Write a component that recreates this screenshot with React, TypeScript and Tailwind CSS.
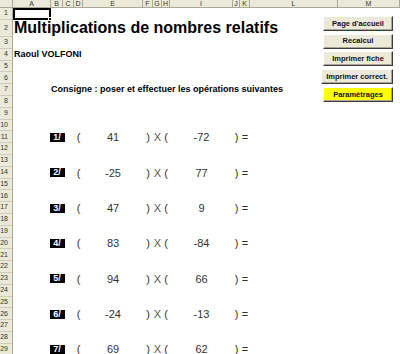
const columns = [
  { label: "A", w: "w-[38px]" },
  { label: "B", w: "w-[12px]" },
  { label: "C", w: "w-[11px]" },
  { label: "D", w: "w-[9px]" },
  { label: "E", w: "w-[60px]" },
  { label: "F", w: "w-[10px]" },
  { label: "G", w: "w-[9px]" },
  { label: "H", w: "w-[8px]" },
  { label: "I", w: "w-[63px]" },
  { label: "J", w: "w-[7px]" },
  { label: "K", w: "w-[10px]" },
  { label: "L", w: "w-[88px]" },
  { label: "M", w: "flex-1" },
];

const problems: Record<number, { n: number; a: string; b: string }> = {
  11: { n: 1, a: "41", b: "-72" },
  14: { n: 2, a: "-25", b: "77" },
  17: { n: 3, a: "47", b: "9" },
  20: { n: 4, a: "83", b: "-84" },
  23: { n: 5, a: "94", b: "66" },
  26: { n: 6, a: "-24", b: "-13" },
  29: { n: 7, a: "69", b: "62" },
};

const rowNumbers = Array.from({ length: 30 }, (_, i) => i + 1);

const buttons = [
  { label: "Page d'accueil", w: "w-[70px]", bg: "bg-[#ece9d8]" },
  { label: "Recalcul", w: "w-[70px]", bg: "bg-[#ece9d8]" },
  { label: "Imprimer fiche", w: "w-[70px]", bg: "bg-[#ece9d8]" },
  { label: "Imprimer correct.", w: "w-[72px]", bg: "bg-[#ece9d8]" },
  { label: "Paramétrages", w: "w-[70px]", bg: "bg-[#ffff00]" },
];

function rowHeight(r: number) {
  return r === 2 ? "h-[17.3px]" : "h-[11.8px]";
}

function ProblemRow({ n, a, b }: { n: number; a: string; b: string }) {
  return (
    <div className="flex h-full items-center text-[11px] text-[#333]">
      <div className="w-[38px]" />
      <div className="w-[12px] flex justify-center">
        <span className="shrink-0 w-[15px] h-[9px] bg-black text-white font-bold text-[9px] leading-[9px] flex items-center justify-center">
          {n}/
        </span>
      </div>
      <div className="w-[11px]" />
      <div className="w-[9px] flex justify-center">(</div>
      <div className="w-[60px] text-center">{a}</div>
      <div className="w-[10px] text-center">)</div>
      <div className="w-[9px] text-center font-light text-[#555]">X</div>
      <div className="w-[8px] text-center">(</div>
      <div className="w-[63px] text-center">{b}</div>
      <div className="w-[7px] text-center">)</div>
      <div className="w-[10px] text-center">=</div>
    </div>
  );
}

function SheetRow({ r }: { r: number }) {
  const p = problems[r];
  return (
    <div className={`${rowHeight(r)} relative`}>
      {r === 1 && (
        <div className="w-[38px] h-full border-2 border-black relative">
          <span className="absolute -right-[3px] -bottom-[3px] w-[4px] h-[4px] bg-black border border-white" />
        </div>
      )}
      {r === 2 && (
        <div className="h-full flex items-end pl-[1px] pb-[1px]">
          <span className="whitespace-nowrap text-[16px] font-bold text-black leading-none">
            Multiplications de nombres relatifs
          </span>
        </div>
      )}
      {r === 4 && (
        <div className="h-full flex items-center pl-[1px]">
          <span className="whitespace-nowrap text-[9px] font-bold text-black">Raoul VOLFONI</span>
        </div>
      )}
      {r === 7 && (
        <div className="h-full flex items-center pl-[38px]">
          <span className="whitespace-nowrap text-[9px] font-bold text-black">
            Consigne : poser et effectuer les opérations suivantes
          </span>
        </div>
      )}
      {p && <ProblemRow {...p} />}
    </div>
  );
}

export default function App() {
  return (
    <div className="w-[400px] h-[354px] overflow-hidden bg-white font-['Liberation_Sans',Arial,sans-serif]">
      {/* column headers */}
      <div className="flex h-[8px] bg-[#ebe9d7] border-b border-[#aca899]">
        <div className="w-[13px] border-r border-[#aca899]" />
        {columns.map((c) => (
          <div
            key={c.label}
            className={`${c.w} border-r border-[#aca899] text-[7px] leading-[8px] text-center text-[#333]`}
          >
            {c.label}
          </div>
        ))}
      </div>

      <div className="flex">
        {/* row headers */}
        <div className="w-[13px] shrink-0 bg-[#ebe9d7] border-r border-[#aca899] overflow-hidden">
          {rowNumbers.map((r) => (
            <div
              key={r}
              className={`${rowHeight(r)} border-b border-[#cfccbc] flex items-center justify-end pr-[4px] text-[7px] text-[#333]`}
            >
              {r}
            </div>
          ))}
        </div>

        {/* sheet cells */}
        <div className="w-[308px] shrink-0">
          {rowNumbers.map((r) => (
            <SheetRow key={r} r={r} />
          ))}
        </div>

        {/* form buttons */}
        <div className="flex-1 flex flex-col items-end pr-[7px] pt-[8px] gap-[2.7px]">
          {buttons.map((b) => (
            <button
              key={b.label}
              className={`${b.w} ${b.bg} h-[15px] border border-t-white border-l-white border-r-[#3c3c3c] border-b-[#3c3c3c] shadow-[inset_-1px_-1px_0_#a8a594] text-[7.5px] font-bold text-[#111] leading-none whitespace-nowrap`}
            >
              {b.label}
            </button>
          ))}
        </div>
      </div>
    </div>
  );
}
